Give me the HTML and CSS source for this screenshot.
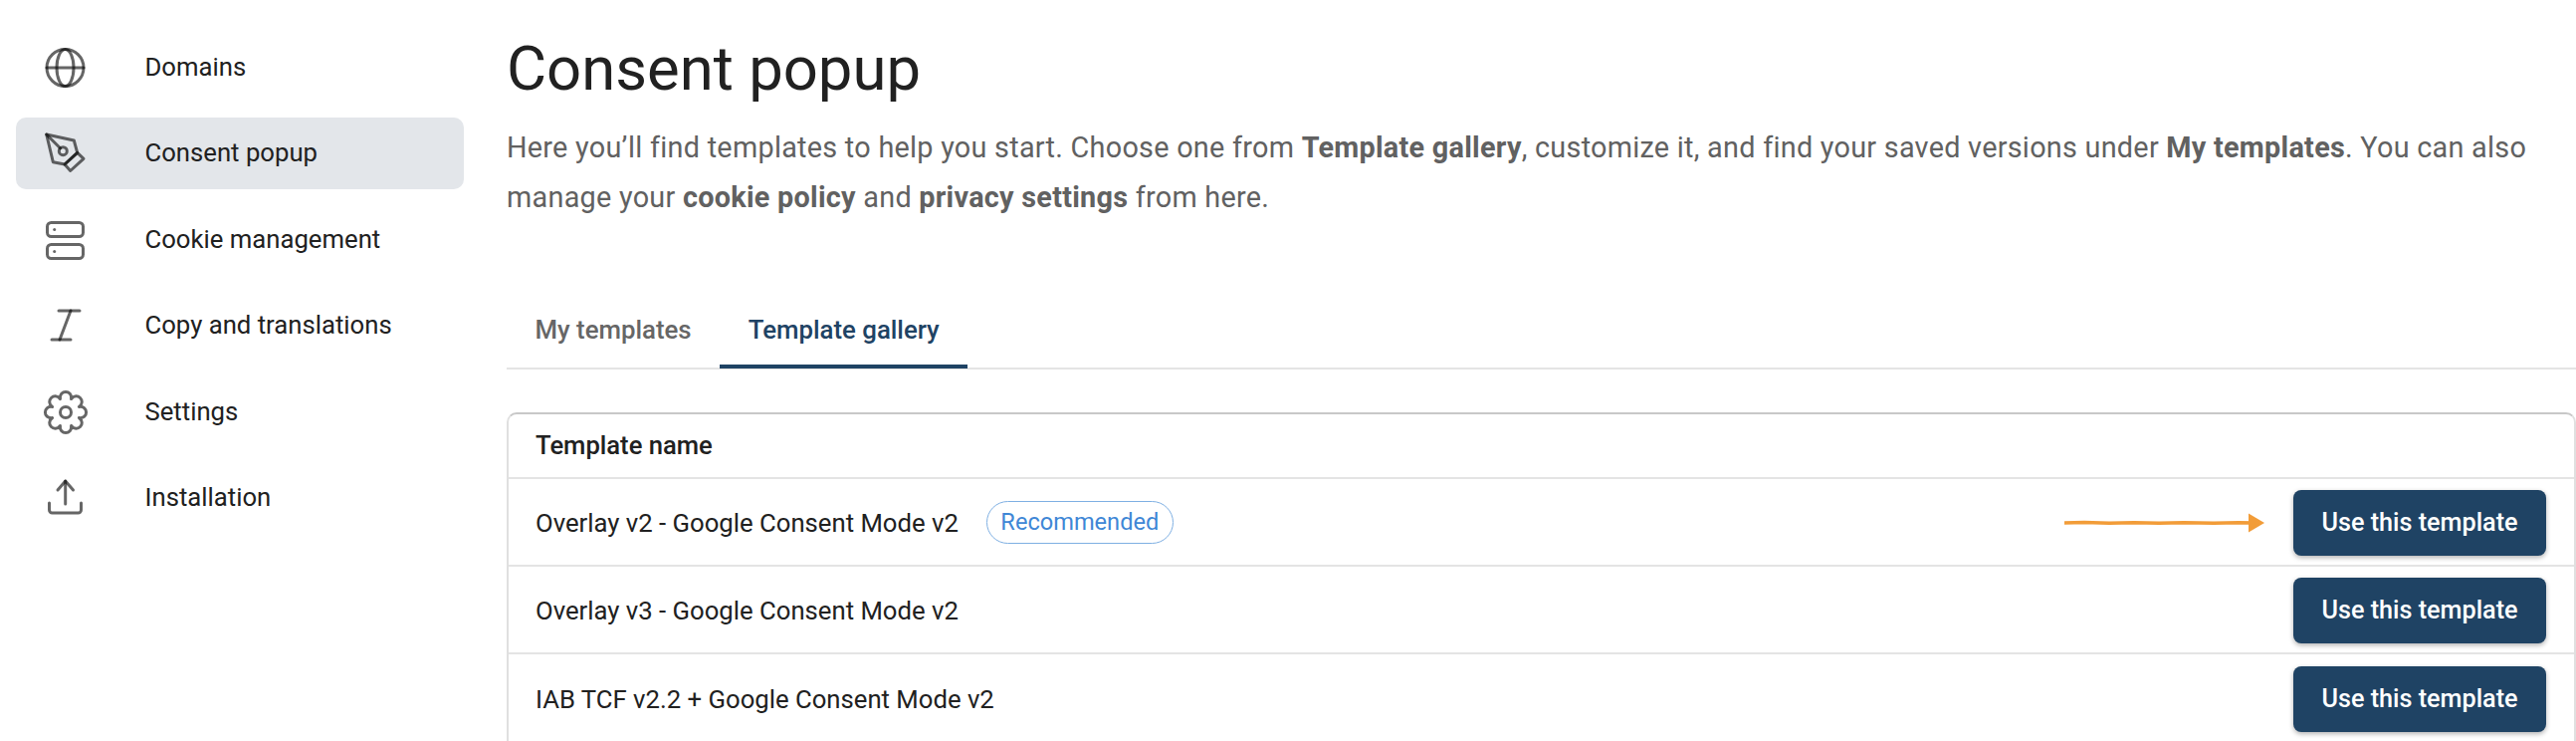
FILE: index.html
```html
<!DOCTYPE html>
<html lang="en">
<head>
    <meta charset="UTF-8">
    <meta name="viewport" content="width=device-width, initial-scale=1.0">
    <title>Consent popup</title>
    <link rel="stylesheet" href="styles.css">
</head>
<body>
    <div class="page">
        <nav class="sidebar">
            <a class="nav-item">
                <svg class="nav-icon" viewBox="0 0 48 48">
                    <circle cx="23.5" cy="24" r="18.5"/>
                    <ellipse cx="23.5" cy="24" rx="8.5" ry="18.5"/>
                    <path d="M5 24H42"/>
                </svg>
                <span>Domains</span>
            </a>
            <a class="nav-item active">
                <svg class="nav-icon" viewBox="0 0 48 48">
                    <path d="M4.7 5L32.3 11L35.7 23.3L23 35L11.3 32.7Z"/>
                    <path d="M4.7 5L18.5 18.8"/>
                    <circle cx="21.3" cy="21.7" r="4"/>
                    <path d="M23 35L35.7 23.3L42 29.3L28.7 41.5Z"/>
                </svg>
                <span>Consent popup</span>
            </a>
            <a class="nav-item">
                <svg class="nav-icon" viewBox="0 0 48 48">
                    <rect x="5.5" y="6.5" width="36" height="14" rx="4"/>
                    <rect x="5.5" y="28.5" width="36" height="14" rx="4"/>
                    <circle class="dot" cx="12.7" cy="13.5" r="1.5"/>
                    <circle class="dot" cx="12.7" cy="35.5" r="1.5"/>
                </svg>
                <span>Cookie management</span>
            </a>
            <a class="nav-item">
                <svg class="nav-icon" viewBox="0 0 48 48">
                    <path d="M17 9H38"/>
                    <path d="M10 38H29"/>
                    <path d="M29 9L18 38"/>
                </svg>
                <span>Copy and translations</span>
            </a>
            <a class="nav-item">
                <svg class="nav-icon" viewBox="0 0 48 48">
                    <g transform="translate(24 24)">
                        <path d="M13.4 -5.55C23 -7 23 7 13.4 5.55C21.2 11.3 11.3 21.2 5.55 13.4C7 23 -7 23 -5.55 13.4C-11.3 21.2 -21.2 11.3 -13.4 5.55C-23 7 -23 -7 -13.4 -5.55C-21.2 -11.3 -11.3 -21.2 -5.55 -13.4C-7 -23 7 -23 5.55 -13.4C11.3 -21.2 21.2 -11.3 13.4 -5.55Z"/>
                        <circle r="5.5"/>
                    </g>
                </svg>
                <span>Settings</span>
            </a>
            <a class="nav-item">
                <svg class="nav-icon" viewBox="0 0 48 48">
                    <path d="M23.7 7V30"/>
                    <path d="M16 16L23.7 7L31.5 16"/>
                    <path d="M7.5 29V36a3 3 0 0 0 3 3H36.5a3 3 0 0 0 3-3V29"/>
                </svg>
                <span>Installation</span>
            </a>
        </nav>

        <main class="content">
            <h1>Consent popup</h1>
            <p class="intro">Here you’ll find templates to help you start. Choose one from <b>Template gallery</b>, customize it, and find your saved versions under <b>My templates</b>. You can also manage your <b>cookie policy</b> and <b>privacy settings</b> from here.</p>

            <div class="tabs">
                <div class="tab">My templates</div>
                <div class="tab selected">Template gallery</div>
            </div>

            <div class="table-card">
                <div class="table-head">Template name</div>
                <div class="table-row">
                    <span>Overlay v2 - Google Consent Mode v2</span>
                    <span class="badge">Recommended</span>
                    <svg class="arrow" viewBox="0 0 201 20">
                        <path class="arrow-line" d="M0 10L20 9.6L45 10.3L70 9.7L95 10.2L120 9.8L150 10.2L175 9.8L190 10"/>
                        <path class="arrow-head" d="M185 0.5L201 10L185 19.5Z"/>
                    </svg>
                    <button class="use-btn">Use this template</button>
                </div>
                <div class="table-row">
                    <span>Overlay v3 - Google Consent Mode v2</span>
                    <button class="use-btn">Use this template</button>
                </div>
                <div class="table-row">
                    <span>IAB TCF v2.2 + Google Consent Mode v2</span>
                    <button class="use-btn">Use this template</button>
                </div>
            </div>
        </main>
    </div>
</body>
</html>
```

FILE: styles.css
```css
html, body {
    margin: 0;
    height: 744px;
    overflow: hidden;
    background-color: #fff;
}
body {
    font-family: Roboto, "Liberation Sans", sans-serif;
    color: #212121;
}
.page {
    display: flex;
}
.sidebar {
    width: 450px;
    flex-shrink: 0;
    margin-left: 16px;
    padding-top: 31.5px;
    display: flex;
    flex-direction: column;
    gap: 14.5px;
}
.nav-item {
    display: flex;
    align-items: center;
    gap: 55.5px;
    height: 72px;
    padding-left: 26px;
    border-radius: 10px;
    font-size: 25.7px;
    line-height: 30px;
}
.nav-item span {
    padding-bottom: 2px;
}
.nav-item.active {
    background-color: #e3e6ea;
}
.nav-icon {
    width: 48px;
    height: 48px;
    flex-shrink: 0;
    fill: none;
    stroke: #000;
    stroke-opacity: 0.6;
    stroke-width: 3;
    stroke-linecap: round;
    stroke-linejoin: round;
}
.nav-icon .dot {
    fill: #000;
    fill-opacity: 0.6;
    stroke: none;
}
.content {
    flex: 1;
    margin-left: 43px;
    min-width: 0;
}
h1 {
    margin: 0;
    padding-top: 29px;
    font-size: 61.6px;
    font-weight: 400;
    line-height: 80px;
}
.intro {
    margin: 14px 0 0;
    font-size: 28.8px;
    letter-spacing: 0.27px;
    line-height: 50px;
    color: #616161;
}
.intro b {
    font-weight: 700;
}
.tabs {
    display: flex;
    margin-top: 84px;
    border-bottom: 2px solid #e4e4e4;
}
.tab {
    padding: 0 28.5px;
    height: 62px;
    line-height: 48px;
    font-size: 25.8px;
    font-weight: 500;
    color: #666;
    box-sizing: border-box;
}
.tab.selected {
    color: #1f4364;
    border-bottom: 4px solid #1f4364;
    margin-bottom: -1px;
    height: 63px;
}
.table-card {
    margin-top: 43px;
    border: 2px solid #e0e0e0;
    border-top-color: #c8c8c8;
    border-bottom: none;
    border-radius: 10px 10px 0 0;
}
.table-head {
    height: 63px;
    line-height: 63px;
    padding-left: 27px;
    font-size: 25.6px;
    font-weight: 500;
    border-bottom: 2px solid #e4e4e4;
}
.table-row {
    display: flex;
    align-items: center;
    box-sizing: border-box;
    height: 88px;
    padding: 1px 28px 0 27px;
    font-size: 25.7px;
    border-bottom: 2px solid #e4e4e4;
}
.table-row:last-child {
    border-bottom: none;
}
.badge {
    margin-left: 28px;
    height: 43px;
    line-height: 40px;
    padding: 0 13.5px;
    box-sizing: border-box;
    border: 1.5px solid #7fb0e3;
    border-radius: 22px;
    color: #3f87d6;
    font-size: 23.6px;
}
.arrow {
    width: 201px;
    height: 20px;
    margin-left: auto;
    margin-right: 29px;
    fill: none;
}
.arrow-line {
    stroke: #f29c38;
    stroke-width: 3.5;
}
.arrow-head {
    fill: #f29c38;
}
.use-btn {
    margin-left: auto;
    width: 254px;
    height: 66px;
    border: none;
    border-radius: 8px;
    background-color: #1f4364;
    color: #fff;
    font-family: inherit;
    font-size: 25.2px;
    font-weight: 500;
    box-shadow: 0 2px 5px rgba(0, 0, 0, 0.3);
}
.arrow + .use-btn {
    margin-left: 0;
}
```
